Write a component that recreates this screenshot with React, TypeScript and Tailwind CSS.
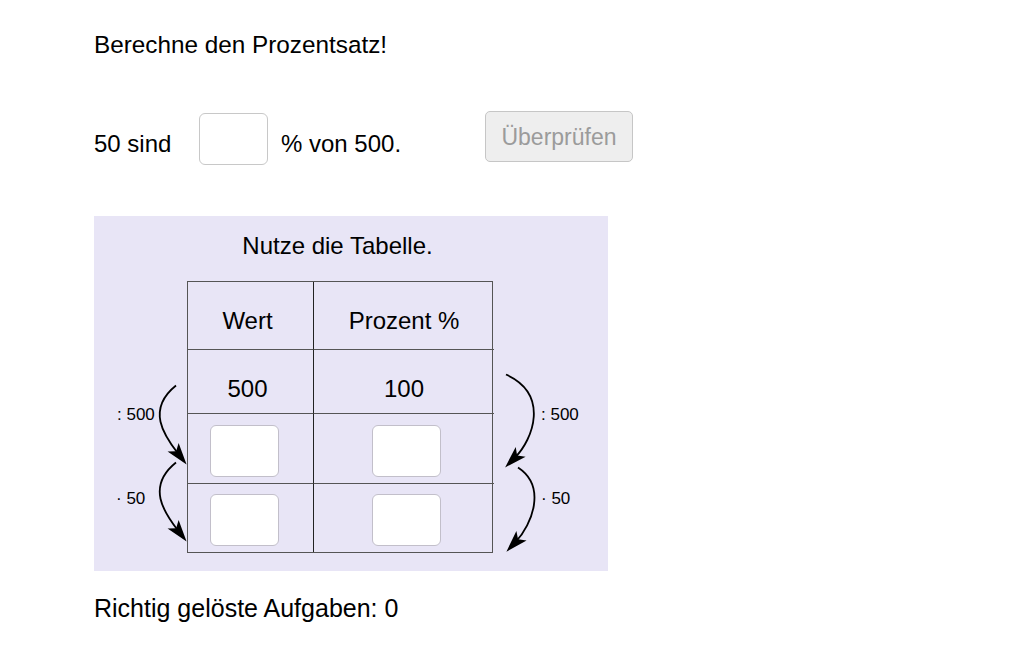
import React from "react";

const font = { fontFamily: '"Liberation Sans", Arial, sans-serif' };

function Box({ className = "" }: { className?: string }) {
  return <div className={`h-[52px] w-[69px] rounded-[6px] border border-[#c2bfca] bg-white ${className}`} />;
}

function Arrows({ side }: { side: "left" | "right" }) {
  const id = `head-${side}`;
  const paths =
    side === "left"
      ? ["M82,104 C52,128 70,154 84,172", "M82,181 C52,205 70,231 84,249"]
      : ["M13,93 C57,113 40,158 22,176", "M25,186 C54,205 39,243 23,260"];
  return (
    <svg className="absolute inset-0 h-full w-full overflow-visible" viewBox={side === "left" ? "0 0 93 271" : "0 0 114 271"}>
      <defs>
        <marker id={id} markerUnits="userSpaceOnUse" markerWidth="24" markerHeight="16" refX="8" refY="7" orient="auto" overflow="visible">
          <path d="M0,0 L22,7 L0,14 L5,7 Z" fill="#000" />
        </marker>
      </defs>
      {paths.map((d) => (
        <path key={d} d={d} fill="none" stroke="#000" strokeWidth="1.8" markerEnd={`url(#${id})`} />
      ))}
    </svg>
  );
}

export default function App() {
  return (
    <div className="min-h-screen bg-white pl-[94px] pt-[31px] text-[24px] leading-[28px] text-black" style={font}>
      <div className="text-[24.3px]">Berechne den Prozentsatz!</div>

      <div className="mt-[52px] flex items-start">
        <div className="mt-[19px] w-[105px]">50 sind</div>
        <Box className="mt-[2px] border-[#c8c8c8]" />
        <div className="ml-[13px] mt-[19px] w-[204px]">% von 500.</div>
        <button className="h-[51px] w-[148px] rounded-[5px] border border-[#c6c6c6] bg-[#eeeeee] text-[23px] text-[#9b9b9b]">
          Überprüfen
        </button>
      </div>

      <div className="mt-[51px] h-[355px] w-[514px] bg-[#e8e5f6] pt-[16px]">
        <div className="ml-[93px] w-[301px] text-center">Nutze die Tabelle.</div>

        <div className="mt-[21px] flex">
          <div className="relative w-[93px] text-[17px] leading-[20px]">
            <Arrows side="left" />
            <div className="absolute left-[23px] top-[124px]">: 500</div>
            <div className="absolute left-[22px] top-[208px]">· 50</div>
          </div>

          <div className="grid w-[306px] grid-cols-[126px_180px] border-[1.5px] border-[#555]">
            <div className="h-[68px] border-b-[1.5px] border-r-[1.5px] border-b-[#555] border-r-[#222] pt-[25px] pr-[6px] text-center">Wert</div>
            <div className="h-[68px] border-b-[1.5px] border-[#555] pt-[25px] text-center">Prozent %</div>

            <div className="h-[64px] border-b-[1.5px] border-r-[1.5px] border-b-[#555] border-r-[#222] pt-[25px] pr-[6px] text-center">500</div>
            <div className="h-[64px] border-b-[1.5px] border-[#555] pt-[25px] text-center">100</div>

            <div className="h-[70px] border-b-[1.5px] border-r-[1.5px] border-b-[#555] border-r-[#222] pl-[22px] pt-[11px]">
              <Box />
            </div>
            <div className="h-[70px] border-b-[1.5px] border-[#555] pl-[58px] pt-[11px]">
              <Box />
            </div>

            <div className="h-[68px] border-r-[1.5px] border-r-[#222] pl-[22px] pt-[10px]">
              <Box />
            </div>
            <div className="h-[68px] pl-[58px] pt-[10px]">
              <Box />
            </div>
          </div>

          <div className="relative w-[114px] text-[17px] leading-[20px]">
            <Arrows side="right" />
            <div className="absolute left-[48px] top-[124px]">: 500</div>
            <div className="absolute left-[48px] top-[208px]">· 50</div>
          </div>
        </div>
      </div>

      <div className="mt-[23px] text-[25px]">Richtig gelöste Aufgaben: 0</div>
    </div>
  );
}
